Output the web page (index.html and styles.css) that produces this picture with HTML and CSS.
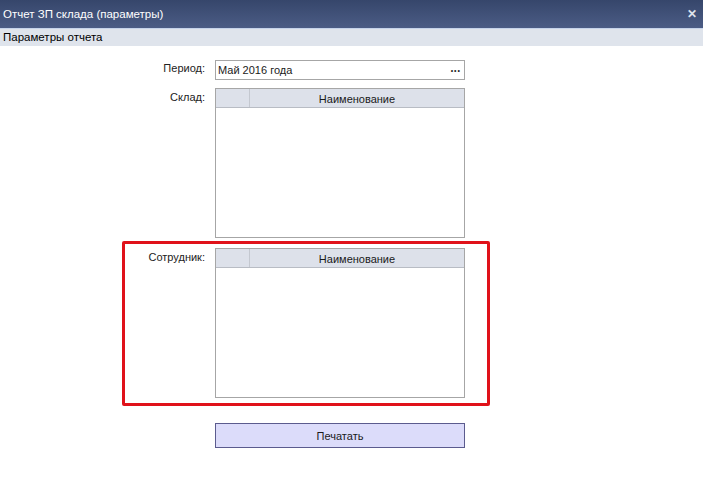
FILE: index.html
```html
<!DOCTYPE html>
<html lang="ru">
<head>
<meta charset="utf-8">
<title>Отчет ЗП склада (параметры)</title>
<link rel="stylesheet" href="styles.css">
</head>
<body>
<div class="window">
  <div class="titlebar">
    <span class="title">Отчет ЗП склада (параметры)</span>
    <span class="close">&#x2715;</span>
  </div>
  <div class="subbar">Параметры отчета</div>
  <div class="form">
    <div class="row row-period">
      <div class="label">Период:</div>
      <div class="field input">
        <span class="value">Май 2016 года</span>
        <span class="dots">&bull;&bull;&bull;</span>
      </div>
    </div>
    <div class="row row-sklad">
      <div class="label">Склад:</div>
      <div class="field grid">
        <div class="grid-head">
          <div class="gh-sel"></div>
          <div class="gh-name">Наименование</div>
        </div>
        <div class="grid-body"></div>
      </div>
    </div>
    <div class="row row-emp">
      <div class="label">Сотрудник:</div>
      <div class="field grid">
        <div class="grid-head">
          <div class="gh-sel"></div>
          <div class="gh-name">Наименование</div>
        </div>
        <div class="grid-body"></div>
      </div>
      <div class="highlight"></div>
    </div>
    <div class="row row-btn">
      <div class="label"></div>
      <button class="field btn">Печатать</button>
    </div>
  </div>
</div>
</body>
</html>
```

FILE: styles.css
```css
* { box-sizing: border-box; }
html, body { margin: 0; padding: 0; background: #ffffff; }
body {
  font-family: "Liberation Sans", Arial, sans-serif;
  font-size: 11px;
  color: #1a1a1a;
}
.window { width: 703px; height: 478px; background: #fff; }
.titlebar {
  height: 28px;
  background: linear-gradient(#36466b, #4b5c85);
  color: #ffffff;
  display: flex;
  align-items: center;
  justify-content: space-between;
  padding: 0 6px 0 3px;
  font-size: 11.5px;
}
.close { font-size: 12px; font-weight: bold; color: #dfe3ec; }
.subbar {
  height: 18px;
  background: #dfe4ec;
  border-top: 1px solid #c5d3ea;
  padding-left: 3px;
  font-size: 11.5px;
  line-height: 16px;
  color: #000;
}
.form { padding-top: 14px; display: flex; flex-direction: column; }
.row { display: flex; position: relative; }
.label {
  width: 215px;
  padding-right: 10px;
  text-align: right;
  color: #222;
  font-size: 11px;
}
.field { width: 250px; }
.row-period .label { padding-top: 2px; }
.input {
  height: 20px;
  border: 1px solid #a6a6a6;
  display: flex;
  align-items: center;
  justify-content: space-between;
  padding: 0 2px 0 2px;
}
.dots { font-size: 7px; letter-spacing: 1px; padding-right: 1px; color: #222; }
.row-sklad { margin-top: 8px; }
.row-sklad .label, .row-emp .label { padding-top: 3px; }
.grid {
  height: 150px;
  border: 1px solid #a6a6a6;
  display: flex;
  flex-direction: column;
}
.grid-head {
  height: 19px;
  background: #dde1ea;
  border-bottom: 1px solid #b8bcc4;
  display: flex;
}
.gh-sel { width: 34px; border-right: 1px solid #c4c8d0; }
.gh-name { flex: 1; text-align: center; line-height: 18px; padding-top: 1px; }
.grid-body { flex: 1; }
.row-emp { margin-top: 10px; }
.highlight {
  position: absolute;
  left: 122px;
  top: -7px;
  width: 368px;
  height: 165px;
  border: 3px solid #e0121a;
  border-radius: 2px;
  pointer-events: none;
}
.row-btn { margin-top: 25px; }
.btn {
  height: 25px;
  background: #dcdcfa;
  border: 1px solid #5b5b8e;
  font-family: inherit;
  font-size: 11px;
  color: #1a1a1a;
  padding: 0;
}
```
